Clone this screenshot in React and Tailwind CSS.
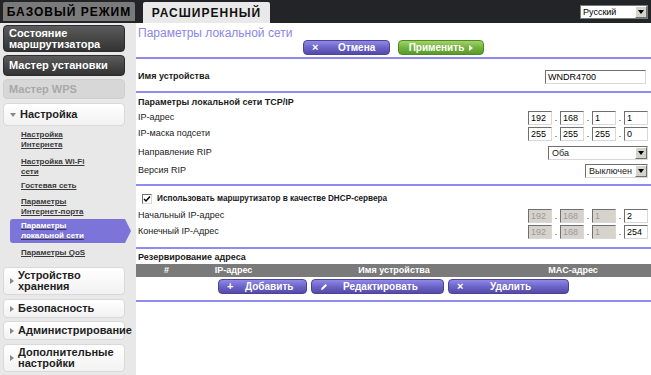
import React from "react";

function TriRight({ className }) {
  return (
    <svg width="4" height="6" viewBox="0 0 4 6" className={className}>
      <path d="M0 0 L4 3 L0 6 Z" fill="currentColor" />
    </svg>
  );
}

function TriDown({ className }) {
  return (
    <svg width="6" height="4" viewBox="0 0 6 4" className={className}>
      <path d="M0 0 L6 0 L3 4 Z" fill="currentColor" />
    </svg>
  );
}

function Box({ value, w = "w-[24px]", disabled }) {
  return (
    <div
      className={`${w} h-[14px] border border-t-[#6f6f6f] border-l-[#6f6f6f] border-b-[#d8d8d8] border-r-[#d8d8d8] text-[9px] leading-[12px] pl-[2px] ${
        disabled ? "bg-[#d6d3cc] text-[#9a9a9a]" : "bg-white text-black"
      }`}
    >
      {value}
    </div>
  );
}

function IpRow({ values, disabled }) {
  return (
    <div className="flex items-center">
      {values.map((v, i) => (
        <React.Fragment key={i}>
          {i > 0 && <span className="w-[8px] text-center text-[9px] leading-[12px]">.</span>}
          <Box value={v} disabled={disabled && i < 3} />
        </React.Fragment>
      ))}
    </div>
  );
}

function Select({ value, w }) {
  return (
    <div className={`${w} h-[14px] flex bg-white border border-t-[#6f6f6f] border-l-[#6f6f6f] border-b-[#d8d8d8] border-r-[#d8d8d8]`}>
      <span className="flex-1 text-[9px] leading-[12px] pl-[3px]">{value}</span>
      <span className="w-[12px] h-[12px] bg-[#d6d3cc] border border-t-white border-l-white border-b-[#6f6f6f] border-r-[#6f6f6f] flex items-center justify-center">
        <TriDown className="text-black" />
      </span>
    </div>
  );
}

function PurpleBtn({ w, icon, label, textCls }) {
  return (
    <div className={`${w} h-[15px] rounded-[4px] bg-linear-to-b from-[#9189e6] via-[#6d64c8] to-[#544aa8] border border-[#4b4398] flex items-center px-[8px] text-white font-bold text-[10px] leading-none`}>
      <span className="w-[10px] text-[11px]">{icon}</span>
      <span className={textCls}>{label}</span>
    </div>
  );
}

function Line() {
  return <div className="h-[2px] bg-[#8d8cee]" />;
}

function SideDark({ children, cls }) {
  return (
    <div className={`w-[122px] rounded-[4px] bg-linear-to-b from-[#5c5c5c] to-[#333333] border border-[#2c2c2c] text-white font-bold text-[11px] leading-[11px] px-[5px] flex items-center ${cls}`}>
      {children}
    </div>
  );
}

function SideWhite({ children, cls, down }) {
  return (
    <div className={`w-[122px] rounded-[4px] bg-linear-to-b from-white to-[#f2f2f2] border border-[#d9d9d9] text-[#1e1e1e] font-bold text-[11px] leading-[11px] pl-[6px] flex items-center gap-[4px] whitespace-nowrap ${cls}`}>
      {down ? <TriDown className="text-[#888] shrink-0" /> : <TriRight className="text-[#888] shrink-0" />}
      <span>{children}</span>
    </div>
  );
}

export default function App() {
  return (
    <div className="w-[651px] h-[375px] overflow-hidden flex flex-col bg-white font-['Liberation_Sans',Arial,sans-serif] text-[#1a1a1a]">
      {/* top bar */}
      <div className="h-[23px] bg-[#222427] flex items-end shrink-0">
        <div className="ml-[3px] w-[132px] h-[19px] mb-[2px] bg-[#7a7a7a] rounded-t-[2px] flex items-center justify-center">
          <span className="text-[12px] font-bold tracking-[1px] text-black">БАЗОВЫЙ РЕЖИМ</span>
        </div>
        <div className="ml-[8px] w-[127px] h-[21px] bg-[#e9e9e9] rounded-t-[2px] flex items-center justify-center">
          <span className="text-[12px] font-bold tracking-[1px] text-[#111]">РАСШИРЕННЫЙ</span>
        </div>
        <div className="ml-auto mr-[3px] mb-[4px] w-[68px] h-[14px] flex bg-white border border-[#7a7a7a]">
          <span className="flex-1 text-[9px] leading-[12px] pl-[2px] text-black">Русский</span>
          <span className="w-[12px] h-[12px] bg-[#d6d3cc] border border-t-white border-l-white border-b-[#6f6f6f] border-r-[#6f6f6f] flex items-center justify-center">
            <TriDown className="text-black" />
          </span>
        </div>
      </div>

      <div className="flex flex-1 min-h-0">
        {/* sidebar */}
        <div className="w-[136px] shrink-0 bg-[#e8e8e8] pl-[3px] flex flex-col">
          <SideDark cls="mt-[2px] h-[27px]">Состояние маршрутизатора</SideDark>
          <SideDark cls="mt-[3px] h-[21px]">Мастер установки</SideDark>
          <div className="mt-[3px] w-[122px] h-[20px] rounded-[4px] bg-[#d7d7d7] border border-[#cfcfcf] text-[#a9a9a9] font-bold text-[11px] px-[5px] flex items-center">
            Мастер WPS
          </div>
          <SideWhite cls="mt-[4px] h-[23px]" down>
            Настройка
          </SideWhite>

          <div className="flex flex-col text-[8px] leading-[10px] font-bold text-[#3a3a3a] underline">
            <div className="mt-[4px] pl-[18px]">Настройка<br />Интернета</div>
            <div className="mt-[7px] pl-[18px]">Настройка Wi-Fi<br />сети</div>
            <div className="mt-[4px] pl-[18px]">Гостевая сеть</div>
            <div className="mt-[6px] pl-[18px]">Параметры<br />Интернет-порта</div>
            <div className="mt-[2px] ml-[7px] w-[121px] h-[24px] bg-[#7c74d8] rounded-l-[3px] text-white pl-[11px] pt-[2px] [clip-path:polygon(0_0,calc(100%-6px)_0,100%_50%,calc(100%-6px)_100%,0_100%)]">
              Параметры<br />локальной сети
            </div>
            <div className="mt-[5px] pl-[18px]">Параметры QoS</div>
          </div>

          <SideWhite cls="mt-[9px] h-[28px]">Устройство<br />хранения</SideWhite>
          <SideWhite cls="mt-[4px] h-[19px]">Безопасность</SideWhite>
          <SideWhite cls="mt-[3px] h-[19px]">Администрирование</SideWhite>
          <SideWhite cls="mt-[4px] h-[28px]">Дополнительные<br />настройки</SideWhite>
        </div>

        {/* content */}
        <div className="flex-1 flex flex-col">
          <div className="h-[17px] pt-[4px] pl-[2px] text-[12px] leading-[13px] text-[#8a86e6]">
            Параметры локальной сети
          </div>
          <div className="h-[15px] flex justify-center gap-[8px]">
            <div className="w-[87px] h-[15px] rounded-[4px] bg-linear-to-b from-[#9189e6] via-[#6d64c8] to-[#544aa8] border border-[#4b4398] flex items-center pl-[8px] text-white font-bold text-[10px] leading-none">
              <span className="w-[18px] text-[11px]">×</span>
              <span className="ml-[8px]">Отмена</span>
            </div>
            <div className="w-[86px] h-[15px] rounded-[4px] bg-linear-to-b from-[#9fd466] via-[#74b33f] to-[#5a9a2b] border border-[#4f8a25] flex items-center justify-center gap-[5px] text-white font-bold text-[10px] leading-none">
              <span>Применить</span>
              <TriRight className="text-white" />
            </div>
          </div>
          <div className="mt-[2px]">
            <Line />
          </div>

          <div className="mt-[11px] h-[14px] flex items-center justify-between pl-[2px] pr-[5px]">
            <span className="text-[9px] font-bold">Имя устройства</span>
            <Box value="WNDR4700" w="w-[101px]" />
          </div>
          <div className="mt-[7px]">
            <Line />
          </div>

          <div className="mt-[4px] h-[12px] flex items-center pl-[2px] text-[9px] font-bold">
            Параметры локальной сети TCP/IP
          </div>
          <div className="mt-[2px] h-[14px] flex items-center justify-between pl-[2px] pr-[3px]">
            <span className="text-[9px]">IP-адрес</span>
            <IpRow values={["192", "168", "1", "1"]} />
          </div>
          <div className="mt-[2px] h-[14px] flex items-center justify-between pl-[2px] pr-[3px]">
            <span className="text-[9px]">IP-маска подсети</span>
            <IpRow values={["255", "255", "255", "0"]} />
          </div>
          <div className="mt-[5px] h-[14px] flex items-center justify-between pl-[2px] pr-[3px]">
            <span className="text-[9px]">Направление RIP</span>
            <Select value="Оба" w="w-[100px]" />
          </div>
          <div className="mt-[4px] h-[14px] flex items-center justify-between pl-[2px] pr-[3px]">
            <span className="text-[9px]">Версия RIP</span>
            <Select value="Выключен" w="w-[63px]" />
          </div>
          <div className="mt-[6px]">
            <Line />
          </div>

          <div className="mt-[7px] h-[12px] flex items-center pl-[6px] gap-[5px]">
            <span className="w-[10px] h-[10px] bg-white border border-t-[#6f6f6f] border-l-[#6f6f6f] border-b-[#d8d8d8] border-r-[#d8d8d8] flex items-center justify-center">
              <svg width="8" height="8" viewBox="0 0 8 8">
                <path d="M1 4 L3 6 L7 1.5" stroke="#000" strokeWidth="1.5" fill="none" />
              </svg>
            </span>
            <span className="text-[8.2px] font-bold">Использовать маршрутизатор в качестве DHCP-сервера</span>
          </div>
          <div className="mt-[4px] h-[14px] flex items-center justify-between pl-[2px] pr-[3px]">
            <span className="text-[9px]">Начальный IP-адрес</span>
            <IpRow values={["192", "168", "1", "2"]} disabled />
          </div>
          <div className="mt-[2px] h-[14px] flex items-center justify-between pl-[2px] pr-[3px]">
            <span className="text-[9px]">Конечный IP-Адрес</span>
            <IpRow values={["192", "168", "1", "254"]} disabled />
          </div>
          <div className="mt-[8px]">
            <Line />
          </div>

          <div className="mt-[3px] h-[12px] flex items-center pl-[2px] text-[9px] font-bold">
            Резервирование адреса
          </div>
          <div className="h-[13px] bg-[#7a7a7a] grid grid-cols-[61px_73px_248px_110px_1fr] items-center text-white text-[9px] font-bold">
            <span className="text-center">#</span>
            <span className="text-center">IP-адрес</span>
            <span className="text-center">Имя устройства</span>
            <span className="text-center">MAC-адрес</span>
            <span />
          </div>
          <div className="mt-[2px] flex justify-center gap-[4px]">
            <PurpleBtn w="w-[89px]" icon="+" label="Добавить" textCls="ml-[8px]" />
            <PurpleBtn
              w="w-[133px]"
              icon={
                <svg width="8" height="8" viewBox="0 0 8 8">
                  <path d="M1 7 L1.5 5 L5.5 1 L7 2.5 L3 6.5 Z" fill="#fff" />
                </svg>
              }
              label="Редактировать"
              textCls="ml-[13px]"
            />
            <PurpleBtn w="w-[121px]" icon="×" label="Удалить" textCls="ml-[23px]" />
          </div>
          <div className="mt-[6px]">
            <Line />
          </div>
        </div>
      </div>
    </div>
  );
}
